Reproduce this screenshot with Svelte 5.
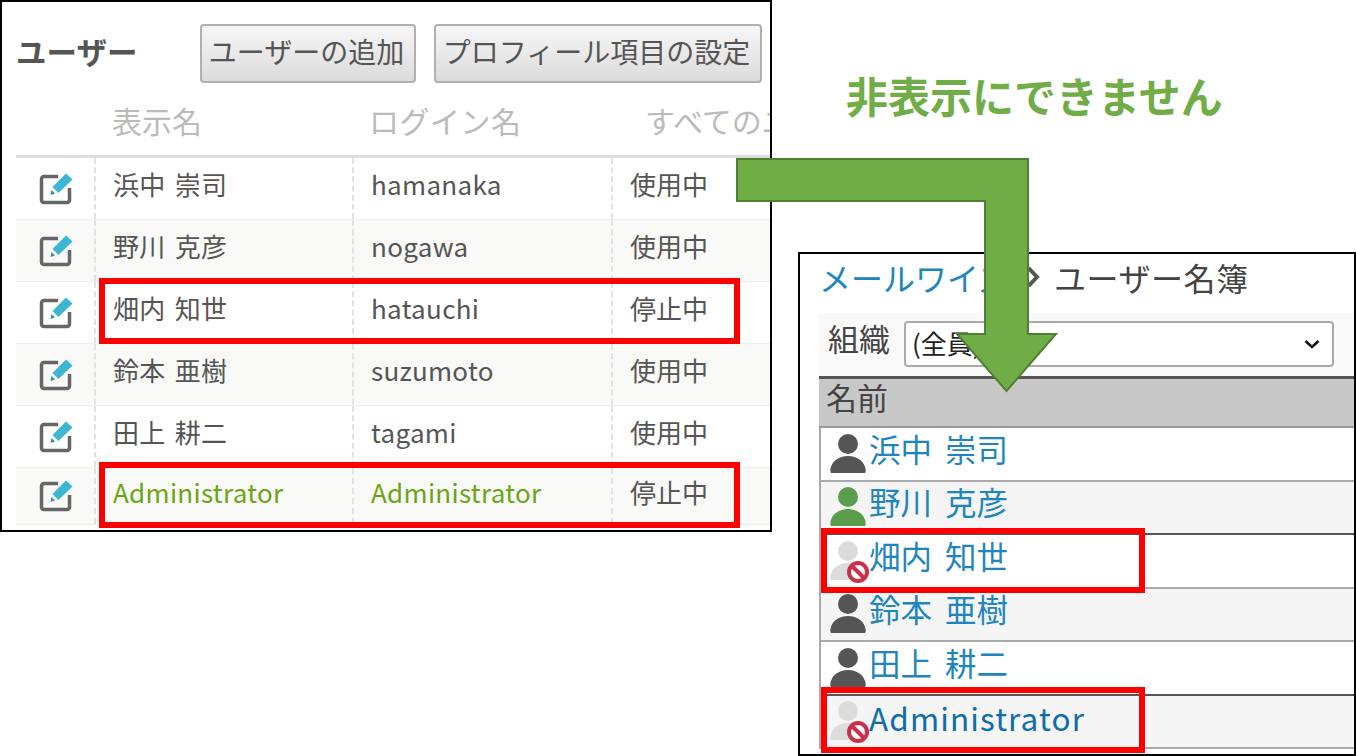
<script>
  const users = [
    { name: '浜中 崇司', login: 'hamanaka', status: '使用中', tone: 'dark' },
    { name: '野川 克彦', login: 'nogawa', status: '使用中', tone: 'green' },
    { name: '畑内 知世', login: 'hatauchi', status: '停止中', tone: 'off' },
    { name: '鈴本 亜樹', login: 'suzumoto', status: '使用中', tone: 'dark' },
    { name: '田上 耕二', login: 'tagami', status: '使用中', tone: 'dark' },
    { name: 'Administrator', login: 'Administrator', status: '停止中', tone: 'off', admin: true }
  ];
</script>

<div class="stage">
  <section class="panel admin">
    <header class="bar">
      <h1>ユーザー</h1>
      <button class="first"><span>ユーザーの追加</span></button>
      <button><span>プロフィール項目の設定</span></button>
    </header>
    <div class="row head">
      <span></span><span>表示名</span><span class="wide">ログイン名</span><span class="all">すべてのユーザー</span>
    </div>
    {#each users as u, i}
      <div class="row body" class:alt={i % 2 === 1} class:adminrow={u.admin}>
        <span class="edit">
          <svg width="36" height="34" viewBox="0 0 36 34">
            <path d="M19 4.500H5A2.500 2.500 0 0 0 2.500 7V28A2.500 2.500 0 0 0 5 30.500H28A2.500 2.500 0 0 0 30.500 28V16" fill="none" stroke="#666" stroke-width="3.500"/>
            <path d="M27 1.500l6.500 6-14 13.500-6-6z" fill="#3cb7d3"/>
            <path d="M12.500 18l3.500 3.500-4.500 1.500z" fill="#2a8fb0"/>
          </svg>
        </span>
        <span class="cell" class:lime={u.admin}>{u.name}</span>
        <span class="cell latin" class:lime={u.admin}>{u.login}</span>
        <span class="cell">{u.status}</span>
      </div>
    {/each}
  </section>

  <section class="panel roster">
    <div class="crumb">
      <a href="#top">メールワイズ</a>
      <svg width="14" height="22" viewBox="0 0 14 22"><path d="M2.500 2l8.500 9-8.500 9" fill="none" stroke="#555" stroke-width="4"/></svg>
      <span class="here">ユーザー名簿</span>
    </div>
    <div class="filter">
      <span class="flabel">組織</span>
      <div class="select">
        <span>(全員)</span>
        <svg width="18" height="12" viewBox="0 0 18 12"><path d="M2.500 3l6.500 6 6.500-6" fill="none" stroke="#111" stroke-width="2.600"/></svg>
      </div>
    </div>
    <div class="list">
      <div class="lhead"><span>名前</span></div>
      {#each users as u, i}
        <div class="lrow" class:alt={i % 2 === 1} class:strong={i % 3 === 1}>
          <svg class="person" width="36" height="40" viewBox="0 0 36 40">
            <g fill={u.tone === 'dark' ? '#555' : u.tone === 'green' ? '#5a9e4b' : '#dcdcdc'}>
              <circle cx="18" cy="10" r="10"/>
              <path d="M1 39c-1-2-1-3 0-6 2-7 9-11 17-11s15 4 17 11c1 3 1 4 0 6z"/>
            </g>
            {#if u.tone === 'off'}
              <circle cx="28" cy="31" r="9" fill="#fff" stroke="#c9304a" stroke-width="4"/>
              <path d="M21.500 24.500l13 13" stroke="#c9304a" stroke-width="4"/>
            {/if}
          </svg>
          <a href="#top" class="lname" class:deep={u.admin}>{u.name}</a>
        </div>
      {/each}
    </div>
  </section>

  <p class="note">非表示にできません</p>

  <svg class="arrow" width="1356" height="756" viewBox="0 0 1356 756">
    <path d="M737 159H1028V334H1056L1006.500 391 957 334H985V201H737z" fill="#70ad47" stroke="#507e32" stroke-width="2"/>
  </svg>

  <i class="mark m1"></i>
  <i class="mark m2"></i>
  <i class="mark m3"></i>
  <i class="mark m4"></i>
</div>

<style>
  :global(body) { margin: 0; background: #fff; }
  .stage {
    position: relative;
    width: 1356px;
    height: 756px;
    overflow: hidden;
    background: #fff;
    font-family: "Noto Sans CJK JP", "Noto Sans", sans-serif;
  }
  .panel {
    position: absolute;
    box-sizing: border-box;
    border: 2px solid #000;
    background: #fff;
    overflow: hidden;
  }
  .admin { left: 0; top: 0; width: 772px; height: 532px; color: #555; }
  .bar { display: flex; align-items: center; height: 88px; padding: 14px 0 0 14px; box-sizing: border-box; }
  h1 { margin: 0 0 5px; width: 184px; font-size: 30.500px; font-weight: 700; color: #555; white-space: nowrap; }
  button {
    box-sizing: border-box;
    height: 59px;
    padding: 0;
    font: inherit;
    font-size: 28px;
    line-height: 1;
    white-space: nowrap;
    color: #555;
    background: linear-gradient(#f6f6f6, #dcdcdc);
    border: 2px solid #b0b0b0;
    border-radius: 4px;
  }
  button span { display: block; margin: -5px 3px 0 0; }
  button.first { width: 216px; margin-right: 18px; }
  button:not(.first) { width: 328px; }
  .row {
    display: grid;
    grid-template-columns: 78px 258px 259px 160px;
    margin-left: 14px;
    white-space: nowrap;
  }
  .head {
    height: 68px;
    align-items: start;
    border-bottom: 3px solid #ddd;
    font-size: 30px;
    color: #bbb;
    box-sizing: border-box;
    padding-top: 8px;
  }
  .head span:nth-child(2) { padding-left: 18px; }
  .head span:nth-child(3) { padding-left: 17px; }
  .head span:nth-child(4) { padding-left: 34px; overflow: hidden; }
  .head .wide { letter-spacing: 0.500px; }
  .body {
    height: 62px;
    box-sizing: border-box;
    border-bottom: 1px solid #eee;
    font-size: 26px;
    word-spacing: 3px;
  }
  .body.alt { background: #f9f9f7; }
  .adminrow { height: 57px; }
  .edit { display: flex; align-items: center; justify-content: center; padding-left: 4px; }
  .cell {
    display: flex;
    align-items: center;
    padding: 0 0 10px 17px;
    border-left: 2px dashed #e2e2e2;
  }
  .latin { letter-spacing: 0.300px; }
  .body .cell:nth-child(2) { letter-spacing: 0.300px; }
  .lime { color: #6aa514; }
  .roster { left: 798px; top: 252px; width: 558px; height: 504px; color: #444; padding-left: 19px; }
  .crumb { display: flex; align-items: center; height: 46px; font-size: 32px; white-space: nowrap; }
  .crumb svg { margin: 0 14px 0 16px; flex: none; }
  .here { letter-spacing: 0.500px; }
  .crumb a, .lname { color: #1f86bd; text-decoration: none; }
  .filter {
    display: flex;
    align-items: flex-start;
    height: 63px;
    margin-top: 13px;
    padding-left: 9px;
    font-size: 31px;
    color: #444;
    background: #fafafa;
  }
  .flabel { margin-top: -3px; width: 76px; flex: none; line-height: 56px; }
  .select {
    display: flex;
    align-items: center;
    justify-content: space-between;
    box-sizing: border-box;
    width: 430px;
    height: 46px;
    padding: 0 11px 0 6px;
    margin-top: 8px;
    font-size: 26px;
    color: #222;
    background: #fff;
    border: 2px solid #aaa;
    border-radius: 4px;
  }
  .select span { margin-top: -3px; }
  .list { border-left: 2px solid #aaa; }
  .lhead {
    box-sizing: border-box;
    height: 52px;
    padding: 0 0 12px 7px;
    display: flex;
    align-items: center;
    font-size: 31px;
    color: #444;
    background: #c8c8c8;
    border-top: 3px solid #555;
    border-bottom: 2px solid #999;
    margin-left: -2px;
  }
  .lrow {
    display: flex;
    align-items: center;
    gap: 3px;
    box-sizing: border-box;
    height: 53.500px;
    padding-left: 9px;
    border-bottom: 2px solid #aaa;
    font-size: 31.500px;
    word-spacing: 6px;
  }
  .lrow.alt { background: #f5f5f5; }
  .lrow.strong { border-bottom-color: #555; }
  .lname { padding-bottom: 12px; white-space: nowrap; }
  .deep { color: #0f6ea8; letter-spacing: 1.100px; padding-bottom: 8px; }
  .person { flex: none; overflow: visible; }
  .note {
    position: absolute;
    left: 846px;
    top: 65px;
    margin: 0;
    font-size: 42px;
    line-height: 60px;
    font-weight: 700;
    color: #70ad47;
    white-space: nowrap;
  }
  .arrow { position: absolute; left: 0; top: 0; }
  .mark { position: absolute; box-sizing: border-box; border: 6px solid #f00; }
  .m1 { left: 99px; top: 278px; width: 641px; height: 66px; }
  .m2 { left: 99px; top: 462px; width: 641px; height: 66px; }
  .m3 { left: 821px; top: 528px; width: 324px; height: 65px; }
  .m4 { left: 821px; top: 687px; width: 324px; height: 66px; }
</style>
